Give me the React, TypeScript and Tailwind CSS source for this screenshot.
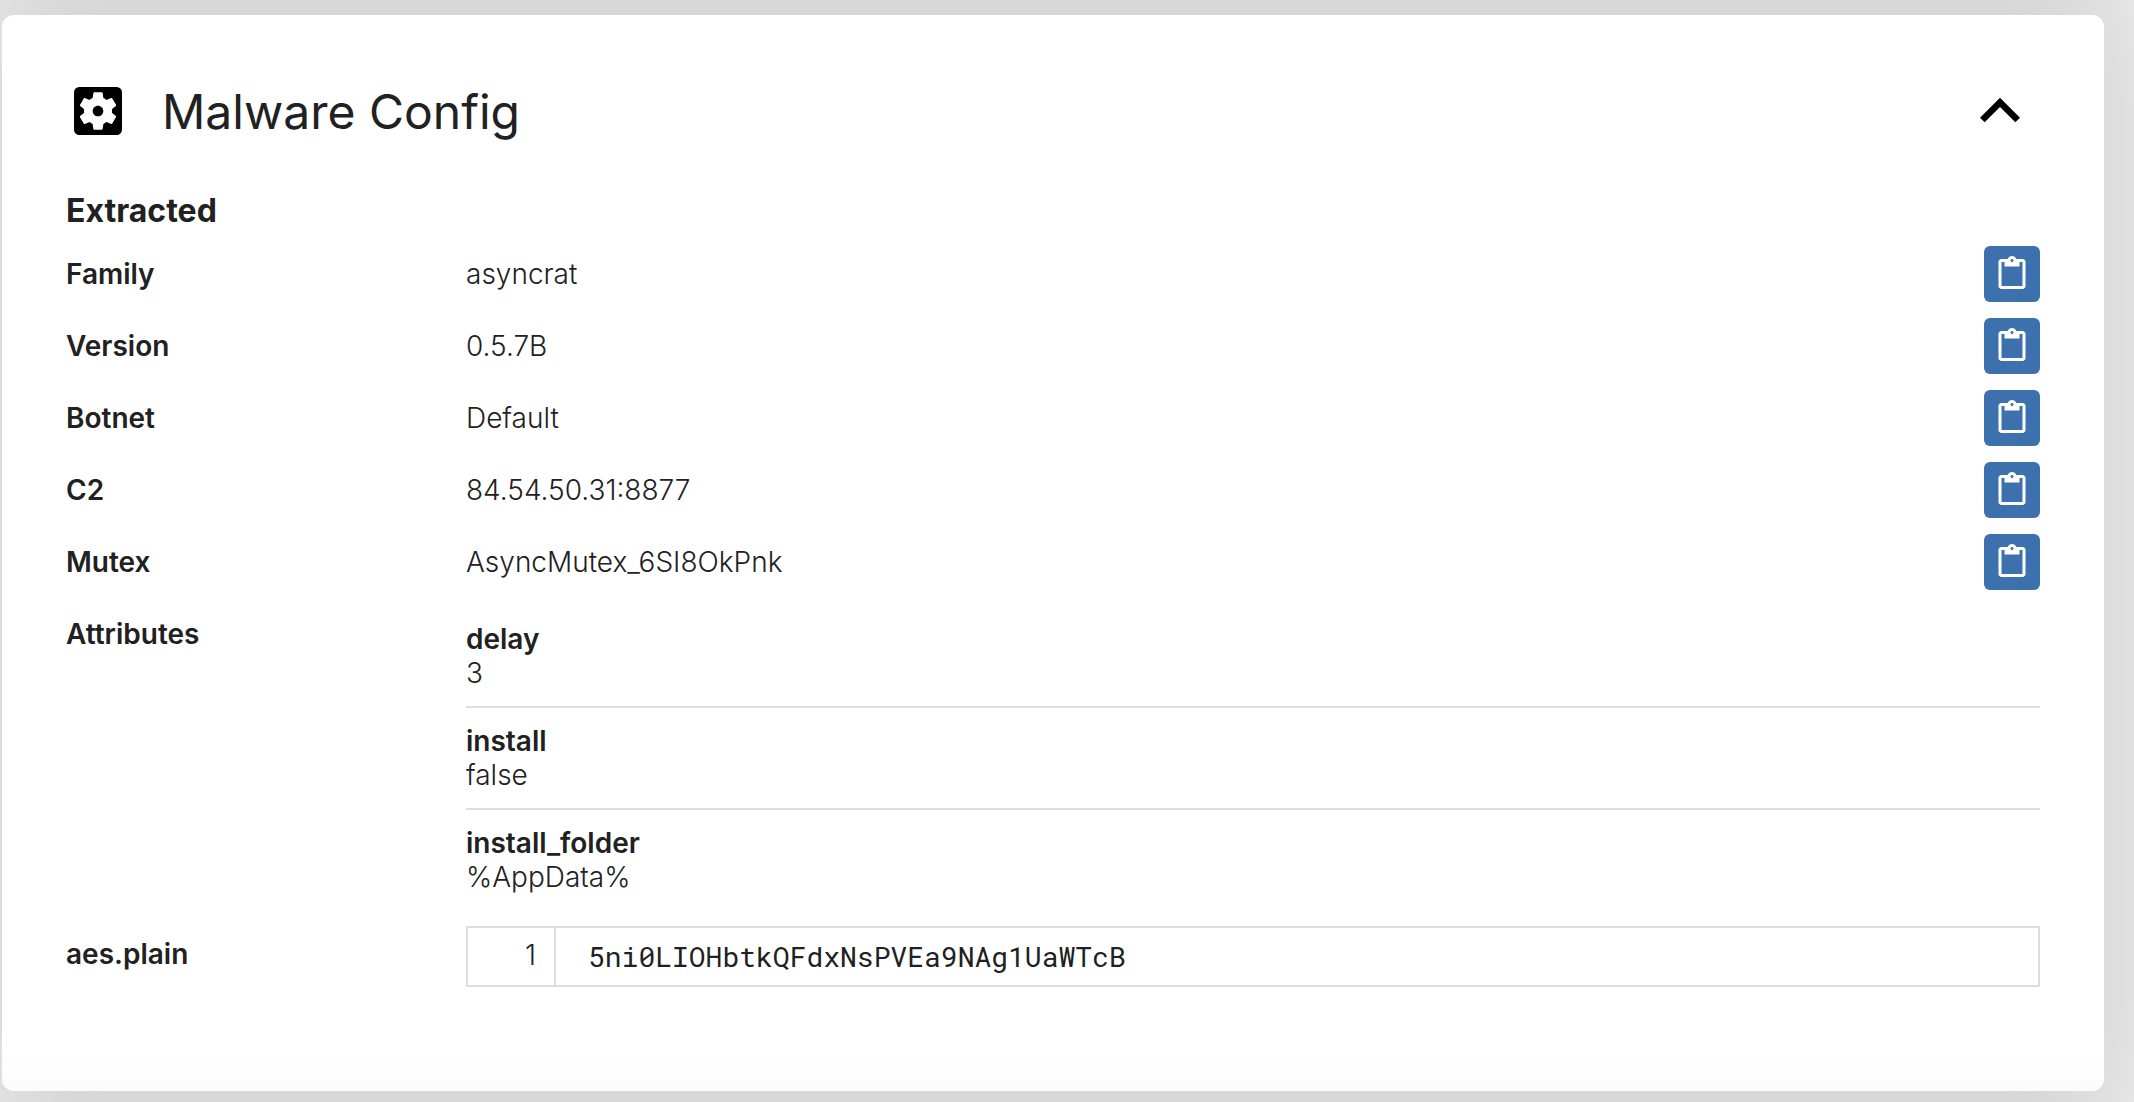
import { useState } from "react";
import { MdContentPaste, MdKeyboardArrowUp, MdSettingsApplications } from "react-icons/md";

const fields = [
  { label: "Family", value: "asyncrat" },
  { label: "Version", value: "0.5.7B" },
  { label: "Botnet", value: "Default" },
  { label: "C2", value: "84.54.50.31:8877" },
  { label: "Mutex", value: "AsyncMutex_6SI8OkPnk" },
];

const attributes = [
  { name: "delay", value: "3" },
  { name: "install", value: "false" },
  { name: "install_folder", value: "%AppData%" },
];

function CopyButton({ label, value }: { label: string; value: string }) {
  return (
    <button
      type="button"
      aria-label={`Copy ${label}`}
      onClick={() => navigator.clipboard?.writeText(value)}
      className="flex size-14 shrink-0 items-center justify-center rounded-md bg-[#3d71ae] text-white"
    >
      <MdContentPaste className="size-9" />
    </button>
  );
}

export default function App() {
  const [open, setOpen] = useState(true);

  return (
    <main className="min-h-screen overflow-hidden bg-[#e9e9e9] pt-[15px] pr-[30px] pb-[11px] pl-0.5 font-['Inter',sans-serif] text-[28px] text-[#212121]">
      <section className="rounded-xl bg-linear-to-t from-[#fcfcfc] to-white to-[40px] px-16 pt-14 pb-[104px] shadow-[0_0_96px_rgba(0,0,0,0.12),0_-1108px_96px_rgba(0,0,0,0.08),0_1108px_96px_rgba(0,0,0,0.08)]">
        <header className="flex items-center gap-8">
          <MdSettingsApplications className="size-16 shrink-0 text-black" />
          <h2 className="flex-1 pt-0.5 text-5xl">Malware Config</h2>
          <button
            type="button"
            aria-label="Toggle section"
            aria-expanded={open}
            onClick={() => setOpen(!open)}
            className="text-black"
          >
            <MdKeyboardArrowUp className="size-20" />
          </button>
        </header>
        {open && (
          <>
            <h3 className="mt-10 mb-[15px] text-[32px] leading-10 font-bold">Extracted</h3>
            <dl className="flex flex-col gap-4 font-light">
              {fields.map((f) => (
                <div key={f.label} className="flex items-center">
                  <dt className="w-[400px] shrink-0 font-semibold">{f.label}</dt>
                  <dd className="flex flex-1 items-center justify-between">
                    {f.value}
                    <CopyButton label={f.label} value={f.value} />
                  </dd>
                </div>
              ))}
              <div className="flex">
                <dt className="w-[400px] shrink-0 leading-14 font-semibold">Attributes</dt>
                <dd className="flex-1 divide-y-2 divide-[#dddddd]">
                  {attributes.map((a) => (
                    <div key={a.name} className="py-4 leading-[34px]">
                      <p className="font-semibold">{a.name}</p>
                      <p>{a.value}</p>
                    </div>
                  ))}
                </dd>
              </div>
              <div className="flex">
                <dt className="w-[400px] shrink-0 leading-14 font-semibold">aes.plain</dt>
                <dd className="flex flex-1 border-2 border-[#dddddd]">
                  <span className="w-[88px] border-r-2 border-[#dddddd] pr-[18px] text-right leading-[54px]">1</span>
                  <code className="px-8 font-['Roboto_Mono','Liberation_Mono',monospace] leading-[57px] font-normal">
                    5ni0LIOHbtkQFdxNsPVEa9NAg1UaWTcB
                  </code>
                </dd>
              </div>
            </dl>
          </>
        )}
      </section>
    </main>
  );
}
